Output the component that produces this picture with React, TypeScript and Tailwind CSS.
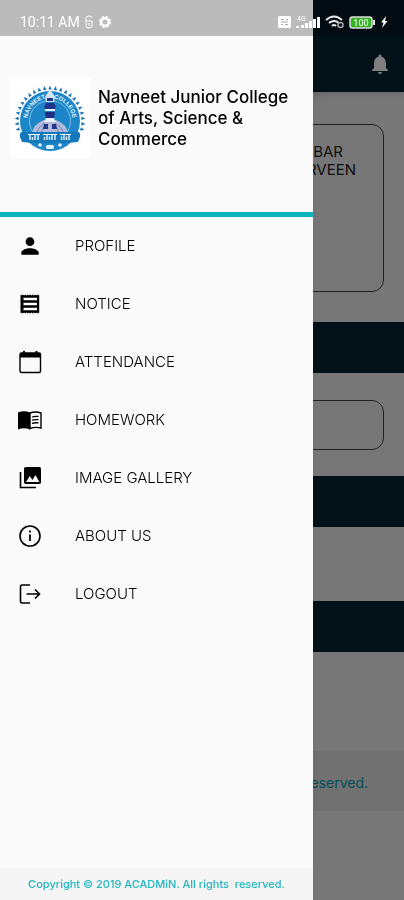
import type { ReactNode } from 'react';
import { MdNotifications, MdPerson } from 'react-icons/md';

type MenuItem = {
  label: string;
  icon: ReactNode;
};

function Icon({ children }: { children: ReactNode }) {
  return (
    <svg viewBox="0 0 26 26" className="size-[26px]" fill="none" stroke="currentColor" strokeWidth="1.6" aria-hidden="true">
      {children}
    </svg>
  );
}

function NoticeIcon() {
  return (
    <Icon>
      <path
        d="M3.500 3.500l1.200 1 1.200-1 1.200 1 1.200-1 1.200 1 1.200-1 1.200 1 1.200-1 1.200 1 1.200-1 1.200 1 1.200-1 1.200 1 1.200-1 1 1 .9-1v19l-.9-1-1 1-1.200-1-1.200 1-1.200-1-1.200 1-1.200-1-1.200 1-1.200-1-1.200 1-1.200-1-1.200 1-1.200-1-1.200 1-1.200-1-1.200 1z"
        fill="currentColor"
        stroke="none"
      />
      <path d="M6.500 8h13.500M6.500 13h13.500M6.500 18h13.500" stroke="#fafafa" strokeWidth="2.400" />
    </Icon>
  );
}

function CalendarIcon() {
  return (
    <Icon>
      <rect x="3" y="4" width="20.500" height="19.500" rx="1.500" strokeWidth="1.400" />
      <path d="M3 4h20.500v4.500H3z" fill="currentColor" stroke="none" />
      <path d="M7 2v3M19.500 2v3" strokeWidth="2" />
    </Icon>
  );
}

function BookIcon() {
  return (
    <Icon>
      <path d="M1 5.500q6-2.500 12 0v17q-6-2.500-12 0z" fill="currentColor" stroke="none" />
      <path d="M13 6q5.500-2 11 0v15q-5.500-1.500-11 .5z" strokeWidth="1.400" />
      <path d="M15 10q3-1 6.500-.5M15 13.200q3-1 6.500-.5M15 16.400q3-1 6.500-.5" strokeWidth="1.300" />
    </Icon>
  );
}

function GalleryIcon() {
  return (
    <Icon>
      <path d="M3.500 7v15.500H19" strokeWidth="1.600" />
      <rect x="7" y="2" width="17" height="17" rx="1.800" fill="currentColor" stroke="none" />
      <path d="M9 17l3.800-6 2.600 4 3-5 4 7z" fill="#fafafa" stroke="none" />
    </Icon>
  );
}

function InfoIcon() {
  return (
    <Icon>
      <circle cx="13" cy="13" r="10" />
      <path d="M13 11.500v6.500M13 7.500v2" strokeWidth="1.800" />
    </Icon>
  );
}

function LogoutIcon() {
  return (
    <Icon>
      <path d="M13 4H5Q3.500 4 3.500 5.500V20.500Q3.500 22 5 22H13" />
      <path d="M9.500 13H22.500M18 8.500l4.500 4.500-4.500 4.500" />
    </Icon>
  );
}

const menu: MenuItem[] = [
  { label: 'PROFILE', icon: <MdPerson size={26} /> },
  { label: 'NOTICE', icon: <NoticeIcon /> },
  { label: 'ATTENDANCE', icon: <CalendarIcon /> },
  { label: 'HOMEWORK', icon: <BookIcon /> },
  { label: 'IMAGE GALLERY', icon: <GalleryIcon /> },
  { label: 'ABOUT US', icon: <InfoIcon /> },
  { label: 'LOGOUT', icon: <LogoutIcon /> },
];

function CollegeLogo() {
  // triangular rays, fanned over the upper part of the seal
  const rays = Array.from({ length: 23 }, (_, i) => -104.500 + i * 9.500);

  return (
    <svg viewBox="0 0 80 80" className="size-20 shrink-0 bg-white" role="img" aria-label="College logo">
      {rays.map(angle => (
        <path key={angle} d="M38.300 11.500h3.400l-1.700-4z" fill="#1672b4" transform={`rotate(${angle} 40 43)`} />
      ))}
      <circle cx="40" cy="43" r="30" fill="#1c86c8" />
      <circle cx="40" cy="43" r="20.500" fill="#1c86c8" stroke="#8fcbec" strokeWidth="0.8" />
      <path id="seal-arc" d="M19.500 53A22.800 22.800 0 1 1 60.500 53" fill="none" />
      <text fill="#eaf7ff" fontSize="6" fontWeight="700" fontFamily="Liberation Sans, sans-serif">
        <textPath href="#seal-arc" startOffset="50%" textAnchor="middle">NAVNEET ★ COLLEGE</textPath>
      </text>
      {/* book mound */}
      <path d="M22 56q1-10 12-14h12q11 4 12 14z" fill="#b3bbdb" />
      <path d="M26 55q3-7 9-10M31 55q2-6 5-9M54 55q-3-7-9-10M49 55q-2-6-5-9" stroke="#7785bb" strokeWidth="1" fill="none" />
      {/* lamp and figure */}
      <path d="M40 11l5 8-1 5h-8l-1-5z" fill="#d2e4f4" />
      <path d="M37 20h6v3h-6zM36 25h8l2 4-2 3h-8l-2-3z" fill="#20338a" />
      <path d="M35 31h10v2H35z" fill="#e6effa" />
      <path d="M35 34h10l-1 6h-8z" fill="#1e2f85" />
      <path d="M36 40h8l2 4H34z" fill="#e6effa" />
      <path d="M34 46h4v5h-5zM42 46h4l1 5h-5z" fill="#26358a" />
      {/* ribbon */}
      <path d="M12 54h56q2 0 2 2v3l-2 5q-28 3-56 0l-2-5v-3q0-2 2-2z" fill="#1578bb" />
      <path d="M18 56.500h12M33 56.500h14M50 56.500h11" stroke="#fff" strokeWidth="1.200" />
      <path d="M20 56v6M22.500 59v3M25 56v6M28 56v6M34.500 59v3M37 56v6M39.500 58.500v3.500M42 56v6M45 56v6M51.500 58.500v3.500M54 56v6M56.500 58.500v3.500M59 56v6" stroke="#e4f3fc" strokeWidth="1.400" />
      <rect x="36" y="67" width="8" height="4" rx="1.500" fill="#e4f3fc" />
      <circle cx="30" cy="67" r="1.800" fill="#e4f3fc" />
      <circle cx="50" cy="67" r="1.800" fill="#e4f3fc" />
    </svg>
  );
}

function StatusBar() {
  return (
    <div className="fixed inset-x-0 top-0 z-30 flex h-9 items-center justify-between bg-black/25 pt-3 pr-4 pb-1 pl-5 text-white">
      <div className="flex items-center gap-1">
        <span className="font-[Roboto,sans-serif] text-sm">10:11 AM</span>
        <svg viewBox="0 0 10 14" className="h-3.5 w-2.5" fill="none" stroke="currentColor" aria-hidden="true">
          <path d="M2 6V3q0-2 3-2t3 2M2 6h6v5q0 2-3 2t-3-2zM5 8v3" />
        </svg>
        <svg viewBox="0 0 14 14" className="size-3.5" fill="none" stroke="currentColor" aria-hidden="true">
          <circle cx="7" cy="7" r="3.800" strokeWidth="2.500" />
          <circle cx="7" cy="7" r="5.300" strokeWidth="1.500" strokeDasharray="2.300 1.860" />
        </svg>
      </div>
      <div className="flex items-center gap-1">
        <svg viewBox="0 0 13 12" className="h-3 w-[13px]" aria-hidden="true">
          <rect width="13" height="12" rx="1.500" fill="currentColor" />
          <path d="M3 3.500h3M8 3.500h2M3 6h7M3 8.500h2M7 8.500h3" stroke="#aaa" strokeWidth="1.200" />
        </svg>
        <svg viewBox="0 0 26 14" className="h-3.5 w-[26px]" fill="currentColor" aria-hidden="true">
          <text x="2" y="6" fontSize="7" fontFamily="Roboto, sans-serif">4G</text>
          <path d="M1 11h3v2H1zM6 10h3v3H6zM10 8h3v5h-3zM14 6h3v7h-3zM18 4h3v9h-3zM22 2h3v11h-3z" />
        </svg>
        <svg viewBox="0 0 20 14" className="h-3.5 w-5" fill="none" stroke="#e5e5e5" strokeWidth="2" aria-hidden="true">
          <path d="M1 5q8-7 16 0M4 8q5-4 10 0M7 11q2-2 4 0" />
          <circle cx="15.500" cy="10" r="2.500" strokeWidth="1.500" stroke="#aaa" />
        </svg>
        <svg viewBox="0 0 27 13" className="h-[13px] w-[27px]" aria-hidden="true">
          <rect x="1" y="1" width="22" height="11" rx="2.500" fill="#35b224" stroke="#ddd" strokeWidth="1.500" />
          <path d="M24 4h2v5h-2z" fill="#ddd" />
          <text x="12" y="9.500" fontSize="9" fontWeight="500" textAnchor="middle" fill="#d9f7d3" fontFamily="Roboto, sans-serif">100</text>
        </svg>
        <svg viewBox="0 0 8 12" className="h-3 w-2" fill="currentColor" aria-hidden="true">
          <path d="M6 0L1 6.500h2.500L2 12l5.500-7H5z" />
        </svg>
      </div>
    </div>
  );
}

function HomePage() {
  return (
    <main className="min-h-screen bg-[#eee] text-[#222]">
      <header className="flex h-[92px] items-center justify-end bg-[#062230] pt-9 pr-3 shadow-md">
        <button aria-label="Notifications" className="text-white">
          <MdNotifications size={24} />
        </button>
      </header>
      <section className="mx-5 mt-8 h-[168px] rounded-xl border border-[#444] pt-[18px] pr-[27px] text-right text-[15px] leading-[18px]">
        <p className="pr-[13px]">BAR</p>
        <p>RVEEN</p>
      </section>
      <div className="mt-[30px] h-[51px] bg-[#062230]" />
      <section className="mx-5 mt-[27px] h-[50px] rounded-xl border border-[#444]" />
      <div className="mt-[26px] h-[51px] bg-[#062230]" />
      <div className="mt-[74px] h-[51px] bg-[#062230]" />
      <footer className="mt-[99px] flex h-[60px] items-center justify-end bg-[#e2e2e2] pt-1 pr-9 text-sm text-[#00a0ac]">
        reserved.
      </footer>
    </main>
  );
}

function Drawer() {
  return (
    <aside className="fixed inset-y-0 left-0 z-20 flex w-[313px] flex-col bg-[#fafafa] text-black shadow-lg">
      <div className="flex h-[217px] items-center gap-2 border-b-[5px] border-[#0db3bd] pt-6 pr-2 pl-2.5">
        <CollegeLogo />
        <h1 className="text-[17px] leading-[21px] font-medium">Navneet Junior College of Arts, Science & Commerce</h1>
      </div>
      <nav className="flex-1">
        <ul>
          {menu.map(item => (
            <li key={item.label}>
              <a href="#" className="flex h-[58px] items-center gap-8 pl-[17px] text-[15px] font-light">
                {item.icon}
                {item.label}
              </a>
            </li>
          ))}
        </ul>
      </nav>
      <footer className="flex h-8 items-center justify-center bg-[#f5f5f5] text-[11px] font-medium whitespace-pre text-[#20b6bd]">
        {'Copyright © 2019 ACADMiN. All rights  reserved.'}
      </footer>
    </aside>
  );
}

export default function App() {
  return (
    <div className="font-[Inter,'Open_Sans',sans-serif]">
      <HomePage />
      <div className="fixed inset-0 z-10 bg-black/50" />
      <Drawer />
      <StatusBar />
    </div>
  );
}
